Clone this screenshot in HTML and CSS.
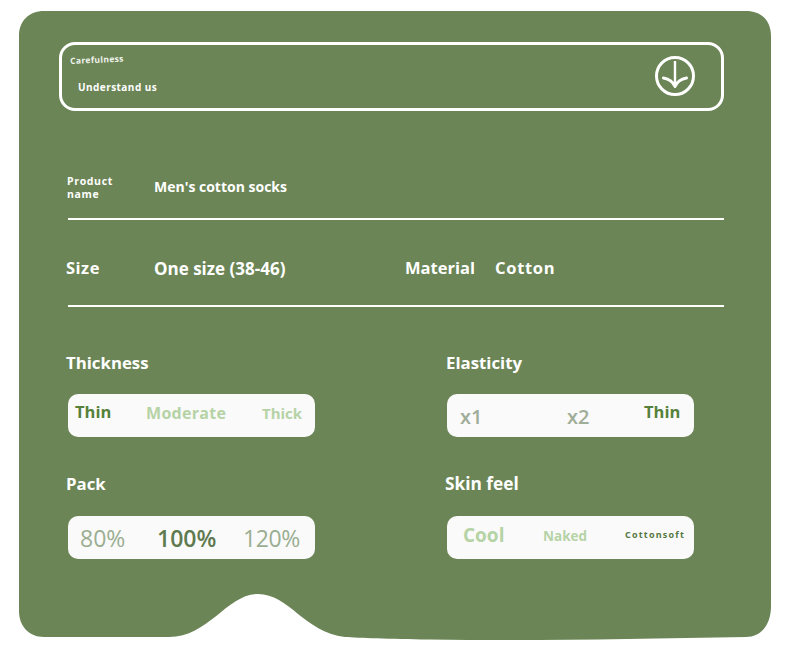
FILE: index.html
```html
<!DOCTYPE html>
<html lang="en">
<head>
<meta charset="utf-8">
<title>Product details</title>
<link rel="stylesheet" href="styles.css">
</head>
<body>
<main class="card">
  <section class="notice">
    <div class="notice-text">
      <p class="eyebrow">Carefulness</p>
      <p class="notice-title">Understand us</p>
    </div>
    <svg class="notice-icon" width="42" height="42" viewBox="0 0 42 42" aria-hidden="true">
      <circle cx="21" cy="21" r="18.5" fill="none" stroke="#fff" stroke-width="3"/>
      <path d="M21 6V30" fill="none" stroke="#fff" stroke-width="2.4"/>
      <path d="M9.5 23Q18 24.5 21 31.5Q24 24.5 32.5 23" fill="none" stroke="#fff" stroke-width="3" stroke-linecap="round" stroke-linejoin="round"/>
    </svg>
  </section>

  <section class="row row-product">
    <h2 class="label-small">Product<br>name</h2>
    <p class="value value-product">Men's cotton socks</p>
  </section>
  <hr class="rule">

  <section class="row row-spec">
    <h2 class="label label-size">Size</h2>
    <p class="value value-size">One size (38-46)</p>
    <h2 class="label label-material">Material</h2>
    <p class="value value-material">Cotton</p>
  </section>
  <hr class="rule">

  <section class="options">
    <div class="option">
      <h3 class="label option-title">Thickness</h3>
      <div class="pill">
        <span class="item thin-a">Thin</span>
        <span class="item moderate">Moderate</span>
        <span class="item thick">Thick</span>
      </div>
    </div>
    <div class="option option-right">
      <h3 class="label option-title">Elasticity</h3>
      <div class="pill">
        <span class="item x1">x1</span>
        <span class="item x2">x2</span>
        <span class="item thin-b">Thin</span>
      </div>
    </div>
    <div class="option option-pack">
      <h3 class="label option-title">Pack</h3>
      <div class="pill">
        <span class="item pct p80">80%</span>
        <span class="item pct p100">100%</span>
        <span class="item pct p120">120%</span>
      </div>
    </div>
    <div class="option option-right option-skin">
      <h3 class="label option-title">Skin feel</h3>
      <div class="pill">
        <span class="item cool">Cool</span>
        <span class="item naked">Naked</span>
        <span class="item cottonsoft">Cottonsoft</span>
      </div>
    </div>
  </section>
</main>
</body>
</html>
```
FILE: styles.css
```css
* { box-sizing: border-box; }
html, body { margin: 0; padding: 0; background: #fff; }
body { width: 790px; height: 671px; overflow: hidden; font-family: "Open Sans", "Noto Sans", sans-serif; color: #fff; }
h2, h3, p { margin: 0; font-weight: 700; }

.card {
  margin: 11px 0 0 19px;
  width: 752px;
  height: 630px;
  padding: 31px 47px 0 40px;
  background: #6b8556;
  clip-path: path("M25 0H727C743 0 752 10 752 25V595C752 614 742 626 727 626C620 628 520 630 410 628.5C370 628 340 627 326 626C285 621 270 583 239 583C208 583 190 626 150 626H25C10 626 0 615 0 600V25C0 10 10 0 25 0Z");
}

.notice {
  width: 665px;
  height: 69px;
  border: 3px solid #fff;
  border-radius: 16px;
  display: flex;
  justify-content: space-between;
  align-items: flex-start;
  padding: 0 25px 0 8px;
}
.eyebrow { font-size: 8.5px; line-height: 11px; letter-spacing: .35px; transform: rotate(-2.5deg); transform-origin: left center; color: #f0f3ec; margin-top: 10px; }
.notice-title { font-size: 10px; line-height: 14px; letter-spacing: .45px; margin: 14px 0 0 8px; }
.notice-icon { display: block; margin-top: 10px; }

.row { display: flex; }
.row-product { margin-top: 63px; margin-left: 8px; align-items: center; height: 26px; }
.label-small { font-size: 10.5px; line-height: 13px; letter-spacing: .65px; width: 87px; margin-top: 2px; }
.value { font-size: 14px; line-height: 20px; }
.value-product { margin-top: -1px; }

.rule { border: 0; height: 2px; background: #fff; margin: 0 0 0 9px; width: 656px; }
.row-product + .rule { margin-top: 18px; }

.row-spec { margin-top: 38px; margin-left: 7px; height: 20px; align-items: center; }
.label { font-size: 16.5px; line-height: 20px; }
.label-size { width: 88px; letter-spacing: .5px; }
.value-size { font-size: 17px; width: 251px; margin-top: 2px; }
.label-material { width: 90px; }
.value-material { font-size: 16.5px; letter-spacing: .7px; }
.row-spec + .rule { margin-top: 27px; }

.options { display: grid; grid-template-columns: 380px 1fr; margin-top: 46px; row-gap: 37px; }
.option { padding-left: 9px; }
.option-title { margin-left: -2px; margin-bottom: 21px; font-size: 16.8px; }
.option-right { padding-left: 8px; }
.option-right .option-title { margin-left: -1px; }
.option-pack .option-title { margin-bottom: 22px; }
.option-skin .option-title { margin: 0 0 22px -2px; font-size: 17.3px; }

.pill { width: 247px; height: 43px; background: #fafafa; border-radius: 10px; position: relative; }
.item { position: absolute; white-space: nowrap; font-weight: 700; line-height: 20px; }
.thin-a { left: 7px; top: 8px; font-size: 16.5px; color: #55813b; }
.moderate { left: 78px; top: 9px; font-size: 16px; color: #b6d3a6; letter-spacing: .3px; }
.thick { left: 194px; top: 9px; font-size: 15px; color: #b6d3a6; }
.x1 { left: 13px; top: 13px; font-size: 20px; color: #a0ad98; font-weight: 600; }
.x2 { left: 120px; top: 13px; font-size: 20px; color: #a0ad98; font-weight: 600; }
.thin-b { left: 197px; top: 8px; font-size: 16.5px; color: #55813b; }
.pct { font-size: 23px; top: 12px; font-weight: 400; color: #9bae92; }
.p80 { left: 12px; }
.p100 { left: 89px; font-weight: 600; color: #5f7a50; }
.p120 { left: 175px; letter-spacing: -.4px; }
.cool { left: 16px; top: 9px; font-size: 19px; color: #b6d3a6; }
.naked { left: 96px; top: 10px; font-size: 13.5px; color: #b6d3a6; }
.cottonsoft { left: 178px; top: 9px; font-size: 9px; letter-spacing: 1.2px; color: #55773f; }
```
